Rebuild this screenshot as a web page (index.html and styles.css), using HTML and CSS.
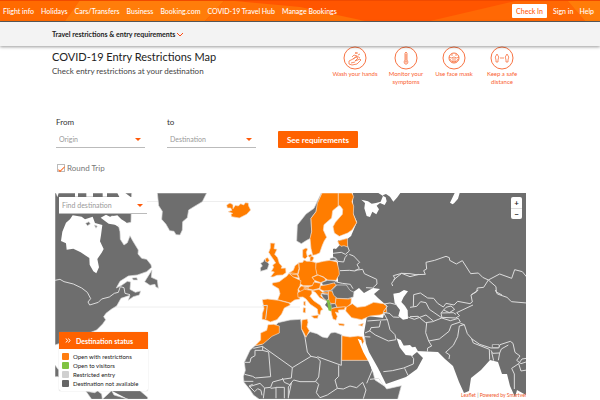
FILE: index.html
```
<!DOCTYPE html>
<html lang="en">
<head>
<meta charset="utf-8">
<meta name="viewport" content="width=device-width, initial-scale=1">
<title>COVID-19 Entry Restrictions Map</title>
<link rel="stylesheet" href="styles.css">
</head>
<body>
<header class="topbar">
  <svg class="topbar-art" viewBox="0 0 600 21" preserveAspectRatio="none" aria-hidden="true">
    <path fill="#ff6a00" d="M0 0H80L65 21H0z"/>
    <path fill="#ff7d0a" d="M80 0H225L205 21H65z"/>
    <path fill="#ff7005" d="M225 0L300 7L365 21H205z"/>
    <path fill="#ff6804" d="M430 21L520 0H567L585 21z"/>
    <path fill="#ff7c08" d="M567 0H600V21H585z"/>
    <path fill="#f04a00" d="M0 0H600V1H0z"/>
  </svg>
  <nav class="nav" aria-label="Main">
    <a href="#">Flight info</a><a href="#">Holidays</a><a href="#">Cars/Transfers</a><a href="#">Business</a><a href="#">Booking.com</a><a href="#">COVID-19 Travel Hub</a><a href="#">Manage Bookings</a>
  </nav>
  <nav class="nav account" aria-label="Account">
    <a class="checkin" href="#">Check In</a><a href="#">Sign in</a><a href="#">Help</a>
  </nav>
</header>
<div class="subbar">
  <button class="subbar-toggle" type="button">Travel restrictions &amp; entry requirements
    <svg viewBox="0 0 8 5" aria-hidden="true"><path d="M1 1L4 4L7 1"/></svg>
  </button>
</div>
<main class="content">
  <section class="intro">
    <div class="heading">
      <h1>COVID-19 Entry Restrictions Map</h1>
      <p>Check entry restrictions at your destination</p>
    </div>
    <ul class="tips">
      <li class="tip-wide">
        <svg viewBox="0 0 24 24" aria-hidden="true"><circle cx="12" cy="12" r="11"/><path d="M6 15l4-2 3-2 2 1-3 3 5-2 1 1-4 4-5 1-3-1zM9 11l2-2 3 1M10 13l4-3 3 2M13 6v2M12 7h3M15 9l2-1M8 17l4-1"/></svg>
        <span>Wash your hands</span>
      </li>
      <li>
        <svg viewBox="0 0 24 24" aria-hidden="true"><circle cx="12" cy="12" r="11"/><path d="M11 14V7q1-2 2 0v7q2 2 0 4h-2q-2-2 0-4zM12 8v8M11 16h2"/></svg>
        <span>Monitor your symptoms</span>
      </li>
      <li class="tip-mid">
        <svg viewBox="0 0 24 24" aria-hidden="true"><circle cx="12" cy="12" r="11"/><circle cx="12" cy="12" r="5"/><path d="M7 11q2 2 5 0q3 2 5 0M8 13q1 3 4 3q3 0 4-3M9 9h2M13 9h2M10 13h4M10 15h4"/></svg>
        <span>Use face mask</span>
      </li>
      <li>
        <svg viewBox="0 0 24 24" aria-hidden="true"><circle cx="12" cy="12" r="11"/><path d="M7 8q-3 3-1 6v2h2v-2q2-3-1-6zM17 8q-3 3-1 6v2h2v-2q2-3-1-6zM10 12h4"/></svg>
        <span>Keep a safe distance</span>
      </li>
    </ul>
  </section>
  <form class="search">
    <div class="field">
      <label for="from">From</label>
      <div class="picker"><select id="from"><option>Origin</option></select></div>
    </div>
    <div class="field">
      <label for="to">to</label>
      <div class="picker"><select id="to"><option>Destination</option></select></div>
    </div>
    <button class="submit" type="button">See requirements</button>
    <label class="round"><input type="checkbox" checked>Round Trip</label>
  </form>
  <section class="map" aria-label="Map">
    <svg class="world" viewBox="55 193 471 206" aria-hidden="true">
      <path class="rule" d="M55 201.500H526M55 307H300"/>
      <!-- North America and Greenland -->
      <g transform="translate(50 190) scale(.33333)">
        <path class="land" d="M15 9H245L243 97L228 100L214 92L200 80L185 78L178 92L196 103L205 105L210 125L211 148L222 165L232 158L240 137L248 152L265 180L264 192L275 205L290 208L303 224L305 232L290 245L262 255L235 258L210 274L199 294L215 286L232 274L242 276L240 298L256 307L272 303L268 315L250 320L235 331L240 316L213 325L200 348L185 357L168 370L161 380L167 389L158 402L140 420L90 440L15 465z"/>
        <path class="land" d="M322 9H470L457 35L432 50L416 60L412 83L398 95L397 120L390 135L378 134L372 124L359 122L348 103L335 88L337 64L326 47zM284 275L306 240L304 262L322 270L325 295L317 290L315 283L300 286zM15 525L26 540V560H15z"/>
        <path class="water" d="M68 76L60 88L48 98L37 125L33 153L48 160L50 179L70 176L92 187L118 204L119 224L130 244L139 250L147 232L142 207L155 188L161 177L150 154L153 136L157 105L135 99L128 80L105 88L95 80zM75 9H84V20H75zM109 9H129V20H109zM158 9H171V20H158zM152 83L176 101L195 104L207 112L204 93L220 105L240 108L226 95L214 88L202 76L180 80L168 74zM202 9H226L242 21H208zM18 9H26L22 22zM267 279L275 295L259 304L246 295z"/>
        <path class="land" d="M107 100L117 95L121 102L112 107zM133 105L142 108L138 115zM246 264L260 263L263 270L250 270z"/>
        <path class="line" d="M15 271L30 268L42 275L70 282L95 294L112 307L122 326L114 336L119 345L145 337L155 327L178 321L193 310L205 307L211 290L222 293L225 310L240 314"/>
        <path class="land" d="M108 604L134 608L143 603L155 612L157 628H125zM185 602H270L293 622V628H157zM185 602L192 615L235 628"/>
      </g>
      <!-- Eurasia -->
      <path class="mass" d="M353 193H526V395L517 390L515 397L510 386L507 374L502 374L498 362L490 360L481 370L471 378L469 391L464 393L459 382L453 366L445 359L438 352L416 351L410 345L400 346L396 343L397 337L391 339L386 332L381 330L372 320L383 318L386 305L378 298L374 294L380 289L373 288L364 293L359 288L352 293L349 305L343 306L335 312L329 309L325 305L329 299L323 292L331 288L323 284L330 280L338 282V262L333 257L333 249L338 246L338 237L351 236L357 222L353 213z"/>
      <path class="mass" d="M367 316L384 318L398 339L403 349L412 356L417 352L423 358L417 369L406 377L386 384L383 378L378 368L369 352L365 341L364 333z"/>
      <!-- Nordic countries and Russia -->
      <g transform="translate(310 190) scale(.33333)">
        <path class="land" d="M34 9L12 55L-12 72L-38 105L-40 153L-26 161L-10 151L2 145L5 125L3 85L18 65z"/>
        <path class="open" d="M36 9H85V48L68 62L65 84L42 104L40 120L50 142L43 152L37 166L29 189L17 194L8 196L3 175L0 145L5 125L3 85L18 65L22 40z"/>
        <path class="open" d="M85 9H126L131 20L126 35L131 48L130 72L140 98L126 120L113 129L88 139L73 129L69 110L76 97L97 73L98 58L90 47L85 48z"/>
        <path class="water" d="M154 29L165 39L163 55L170 78L180 81L187 65L199 73L207 58L200 47L210 39L224 45L230 34L227 22L218 17L205 9H271L262 22L250 35L240 20L228 12L220 15L212 35L198 39L185 41L174 34zM434 9H449L444 26L433 39L428 43L420 38z"/>
        <path class="water" d="M84 141L119 130L124 137L112 147L90 151L82 151L92 162L78 177L68 174L65 151z"/>
        <path class="open" d="M83 153L112 145L113 171L102 167L93 169L86 162z"/>
        <path class="line" d="M69 190L94 187L106 193L118 183L113 169M69 201L78 205L83 214L101 216L105 203L112 194M118 193L131 198L149 217L141 224L148 235L135 243L118 241L90 242M135 241L158 238L163 251L200 268L201 282L188 294L168 293M85 244L82 266M79 276L97 280L121 283L129 296M248 288L245 280L255 266L250 257L275 250L300 260L327 253"/>
        <path class="open" d="M0 195L12 203L7 213L0 214z"/>
      </g>
      <!-- Europe -->
      <g transform="translate(240 230) scale(.33333)">
        <path class="open" d="M91 39L105 40L102 56L111 58L104 73L113 83L118 100L126 109L124 115L137 114L138 128L128 135L111 136L99 141L92 140L103 126L94 124L101 112L98 105L107 99L102 91L93 78L86 67L91 54z"/>
        <path class="land" d="M74 87L83 97L87 103L82 118L62 124L61 114L67 108L62 100L70 95z"/>
        <path class="open" d="M77 85L83 83L88 91L83 97L76 94z"/>
        <path class="open" d="M188 59L198 54L203 57L199 67L202 80L195 87L188 82zM204 77L213 72L216 78L209 82z"/>
        <path class="open" d="M176 98L188 97L192 90L200 94L213 94L228 98L229 116L232 134L216 142L225 152L218 167L190 167L177 160L178 145L174 134L178 118z"/>
        <path class="open" d="M228 99L250 94L270 91L291 96L297 121L298 133L288 151L263 150L249 140L231 134L227 115z"/>
        <path class="open" d="M176 99L177 116L172 134L157 133L148 128L160 121L165 107zM147 128L171 131L176 144L158 141z"/>
        <path class="open" d="M147 130L160 141L183 152L180 167L174 178L175 192L180 207L164 210L151 219L113 209L120 191L116 176L97 165V159L118 155L131 145L140 139z"/>
        <path class="open" d="M67 209L83 207L116 211L147 219L151 225L133 234L125 252L111 269L91 276L78 270L66 268L67 250L72 236z"/>
        <path class="line" d="M67 227L82 226L77 267"/>
        <path class="open" d="M175 177L184 168L205 171L203 181L181 186zM191 174L217 167L222 156L242 160L239 175L219 180zM217 142L234 135L253 143L258 151L242 158L223 151z"/>
        <path class="open" d="M173 188L193 178L215 181L216 190L210 199L221 212L241 226L249 239L243 241L240 255L234 252L232 237L211 223L198 207L189 201L174 202zM214 258L235 255L233 265L222 265zM190 233L197 234L196 249L189 247zM191 215L196 214V227L191 225z"/>
        <path class="land" d="M245 158L262 151L288 153L281 161L259 165L248 166zM270 85L282 83L290 91L270 91z"/>
        <path class="open" d="M241 167L258 165L281 159L289 164L272 181L252 183L240 178z"/>
        <path class="open" d="M216 182L237 178L248 187L265 185L267 192L246 190L242 197L258 212L239 203L226 187z"/>
        <path class="land" d="M243 191L264 194L266 207L259 212L249 203zM272 222L287 220L290 232L274 235z"/>
        <path class="open" d="M265 183L276 183L288 202L286 221L271 220L266 208z"/>
        <path class="land" d="M276 181L291 165L319 165L330 181L342 187L340 201L323 206L292 205L281 196z"/>
        <path class="open" d="M288 205L325 207L334 205L333 220L322 232L291 232L286 220z"/>
        <path class="open" d="M272 237L286 233L316 230L313 239L295 240L296 249L286 246L292 259L288 271L279 267L275 254zM295 280L313 282L312 288L297 286z"/>
        <path class="open" d="M319 231L337 221L351 232L376 229L401 217L430 221L439 225L440 247L420 255L390 258L365 269L335 263L317 243zM355 285L370 280L367 289z"/>
        <path class="visitors" d="M259 209L269 212L269 221L274 230L273 243L266 241L263 221z"/>
      </g>
      <!-- Africa -->
      <g transform="translate(200 300) scale(.33333)">
        <path class="land" d="M165 137L186 133L193 103L211 97L234 68L270 60L302 58L305 88L315 112L330 95L351 101L367 111L382 114L392 99L405 97L425 104L424 180L510 180L525 240L554 259L560 267L604 257L593 298H178L160 285L149 268L132 247L130 230L136 211L133 187L150 151z"/>
        <path class="open" d="M204 74L221 73L238 78L238 99L216 109L189 132L165 137L182 120L182 99L200 91z"/>
        <path class="open" d="M306 60L322 57L324 67L321 80L328 92L318 112L312 99L304 85z"/>
        <path class="open" d="M426 107L450 111L474 108L487 110L492 124L486 135L508 181H425z"/>
        <path class="line" d="M187 139L277 203L333 169L322 156L315 112M160 145L188 139V151H165V167L153 174L150 187H134M187 151L206 156L212 230L166 234L158 229L134 223M277 203L274 234L247 238L218 246L212 262L194 264L190 295M333 169L352 173L361 183L356 231L346 245L300 245L281 240L269 254L253 247L247 234M352 170L424 196V180M416 196V229L405 240L412 265L382 285L360 293L349 278L356 253L347 244M412 265L430 267L450 258L470 263L488 247L498 270L490 296M510 180L517 210L500 250M158 253L147 258L164 275L173 266L183 271L186 286M228 295V262H253V295M265 295V261L274 250M132 244L160 244M148 260L180 250L194 264M212 265L228 263M274 250L265 292M510 238L536 235L554 259"/>
      </g>
      <!-- Middle East and Caspian Sea -->
      <g transform="translate(320 290) scale(.33333)">
        <path class="water" d="M220 11L238 8L252 0L264 4L251 21L244 36L255 48L263 61L264 86L249 89L235 78L240 60L224 39zM113 146L124 151L128 167L153 203L163 229L180 247L193 288L188 281L174 258L158 244L146 216L130 187z"/>
        <path class="water" d="M230 145L242 150L252 169L264 175L286 170L294 184L285 186L277 197L257 195L247 182L239 172z"/>
        <path class="line" d="M142 93L182 90L202 89L190 67L207 70M135 129L150 122L153 113L178 111L182 93M147 121L166 135L205 153L228 149M202 88L210 119L225 134L228 148M207 69L220 81L238 82M190 65L202 49L192 42L210 39L230 44M133 139L137 160M190 245L217 242L251 234L280 222L281 206L275 198M254 235L264 256M134 140L151 141M264 81L283 88L318 75L340 93"/>
      </g>
      <!-- Central and South Asia -->
      <g transform="translate(410 190) scale(.33333)">
        <path class="line" d="M-50 270L-25 250L0 251L18 254L46 253L41 242L50 237L48 217L74 211L108 199L118 203L119 211L139 222L157 212L182 251L205 249L218 262L235 270L269 252L305 265L314 239L337 245L350 261M235 270L221 292L202 294L200 305L185 314M235 270L258 290L259 306L276 315"/>
      </g>
      <g transform="translate(410 290) scale(.33333)">
        <path class="line" d="M10 50L11 14L31 9L53 24L71 25L83 40L100 51L108 40L132 45L143 34L180 41L187 36L183 15L205 0M0 52L20 49L32 35L48 38L58 58L96 84L93 69L108 52L123 48L134 58L118 68L101 60M96 82L137 84L149 77L140 68L189 45M0 80L24 79L47 98L68 95L95 84L121 92L145 85L151 96L124 105L117 124L88 147L56 153L47 128L50 99M56 153L65 168L53 174L52 185M151 100L163 104L172 131L186 147L209 163L243 174L266 174L270 164L301 154L309 160L315 187L330 198L320 211L333 221L351 215M117 207L119 195L107 187L130 166L143 140L148 108L163 104M185 147L190 159L238 178L239 209M243 181L248 190L269 189L274 177L295 165M245 187L251 212M269 189L265 211M256 0L262 12L291 22L304 35L350 39M350 205L336 207L326 221L305 235L313 252V297M326 221L333 243L351 240M94 69L130 68L138 73"/>
        <path class="dark" d="M247 164H267V172H247z"/>
      </g>
      <!-- Iceland -->
      <g transform="translate(200 190) scale(.33333)">
        <path class="open" d="M80 45L90 39L99 44L99 56L106 46L115 48L122 41L131 45L136 38L145 39L146 48L152 60L140 73L118 84L95 80L93 73L98 70L84 65L96 61L92 54L82 54z"/>
      </g>
    </svg>
    <div class="picker finder"><select aria-label="Find destination"><option>Find destination</option></select></div>
    <div class="zoom"><button type="button" aria-label="Zoom in">+</button><button type="button" aria-label="Zoom out">−</button></div>
    <div class="legend">
      <button type="button" class="legend-title"><svg viewBox="0 0 6 5" aria-hidden="true"><path d="M1 0.500L2.500 2.500L1 4.500M3.500 0.500L5 2.500L3.500 4.500"/></svg>Destination status</button>
      <ul>
        <li><i class="swatch sw-open"></i>Open with restrictions</li>
        <li><i class="swatch sw-visitors"></i>Open to visitors</li>
        <li><i class="swatch sw-restricted"></i>Restricted entry</li>
        <li><i class="swatch sw-none"></i>Destination not available</li>
      </ul>
    </div>
    <p class="credit"><a href="#">Leaflet</a> | <a href="#">Powered by Smartvel</a></p>
  </section>
</main>
</body>
</html>
```
FILE: styles.css
```
* { box-sizing: border-box; }
body { margin: 0; font-family: Lato, "Open Sans", sans-serif; font-size: 8px; color: #333; background: #fff; overflow: hidden; }
h1, p, ul { margin: 0; padding: 0; }
ul { list-style: none; }
a { color: inherit; text-decoration: none; }
button, select, input { font: inherit; color: inherit; margin: 0; border: 0; padding: 0; background: none; }

.topbar { position: relative; display: flex; align-items: center; justify-content: space-between; height: 22px; padding: 0 6px 0 3px; background: #ff5500; border-bottom: 1px solid #5c5c5c; color: #fff; }
.topbar-art { position: absolute; inset: 0; width: 100%; height: 100%; }
.nav { position: relative; display: flex; align-items: center; gap: 7px; font-size: 7px; font-weight: 500; white-space: nowrap; }
.account { gap: 6px; }
.checkin { padding: 3px 4px; background: #fff; color: #ff5a0a; border-radius: 1px; }

.subbar { position: relative; display: flex; align-items: center; height: 24px; padding-left: 52px; background: #f3f3f3; box-shadow: 0 1px 3px rgba(0, 0, 0, .4); }
.subbar-toggle { display: flex; align-items: center; gap: 1px; font-size: 7px; font-weight: 700; color: #222; }
.subbar-toggle svg { width: 8px; height: 5px; fill: none; stroke: #ff4a10; stroke-width: 1; }

.content { padding: 0 74px 0 52px; }
.intro { display: flex; justify-content: space-between; height: 70px; }
.heading { padding-top: 4px; }
h1 { font-size: 11px; line-height: 14px; font-weight: 400; color: #222; }
.heading p { font-size: 8px; line-height: 14px; color: #444; }
.tips { display: flex; gap: 9px; padding-right: 6px; color: #fa6130; font-size: 6px; line-height: 8px; text-align: center; }
.tips li { display: flex; flex-direction: column; align-items: center; width: 36px; }
.tips .tip-wide { width: 48px; }
.tips .tip-mid { width: 42px; }
.tips svg { width: 24px; height: 24px; fill: none; stroke: #f87342; stroke-width: 1; }
.tips path { opacity: .8; }

.search { display: grid; grid-template-columns: 89px 89px 80px; column-gap: 22px; padding-left: 4px; align-items: end; }
.field { display: flex; flex-direction: column; gap: 3px; }
.field label { font-size: 8px; line-height: 12px; }
.picker { position: relative; height: 17px; border-bottom: 1px solid #bbb; }
.picker::after { content: ""; position: absolute; right: 4px; top: 7px; border: 3px solid transparent; border-top-color: #ff5a0a; border-bottom: 0; pointer-events: none; }
.picker select { width: 100%; height: 16px; padding-left: 3px; appearance: none; color: #999; font-size: 7px; }
.submit { height: 17px; border-radius: 1px; background: #ff6200; color: #fff; font-size: 8px; font-weight: 700; }
.round { grid-column: 1 / -1; display: flex; align-items: center; gap: 2px; padding: 15px 0 20px 1px; font-size: 8px; line-height: 10px; color: #777; }
.round input { appearance: none; display: grid; place-items: center; width: 8px; height: 8px; border: 1px solid #bbb; }
.round input:checked::after { content: ""; width: 6px; height: 2px; border: solid #ff6a20; border-width: 0 0 1px 1px; transform: rotate(-45deg); }

.map { position: relative; margin-left: 3px; }
.world { display: block; width: 100%; }
.rule { stroke: #eee; fill: none; stroke-width: 1; }
.mass { fill: #6e6e6e; }
.land { fill: #6e6e6e; stroke: #ddd; stroke-width: 2; }
.open { fill: #ff7d00; stroke: #f5ddc8; stroke-width: 2; }
.visitors { fill: #80c342; stroke: #80c342; stroke-width: 1; }
.water { fill: #fff; }
.line { fill: none; stroke: #ddd; stroke-width: 3; }
.dark { fill: #555; stroke: #eee; stroke-width: 2; }
.finder { position: absolute; left: 4px; top: 4px; width: 88px; height: 17px; background: #fff; }
.zoom { position: absolute; right: 4px; top: 4px; display: flex; flex-direction: column; width: 11px; background: #fff; border-radius: 2px; }
.zoom button { height: 11px; font-size: 8px; line-height: 10px; font-weight: 700; color: #222; }
.zoom button + button { border-top: 1px solid #ddd; }
.legend { position: absolute; left: 4px; bottom: 8px; width: 89px; background: #fff; border-radius: 2px; box-shadow: 0 0 1px #aaa; }
.legend-title { display: flex; align-items: center; gap: 5px; width: 100%; height: 17px; padding-left: 6px; background: #ff6200; color: #fff; font-size: 7px; font-weight: 700; }
.legend-title svg { width: 6px; height: 5px; fill: none; stroke: #fff; }
.legend ul { padding: 3px; }
.legend li { display: flex; align-items: center; gap: 4px; height: 9px; font-size: 6px; color: #222; white-space: nowrap; }
.swatch { flex: none; width: 7px; height: 7px; border-radius: 1px; }
.sw-open { background: #ff7d10; }
.sw-visitors { background: #80c342; }
.sw-restricted { background: #d0d0d0; }
.sw-none { background: #666; }
.credit { position: absolute; right: 0; bottom: 0; font-size: 5px; line-height: 8px; color: #888; }
.credit a { color: #f0592a; }
```
